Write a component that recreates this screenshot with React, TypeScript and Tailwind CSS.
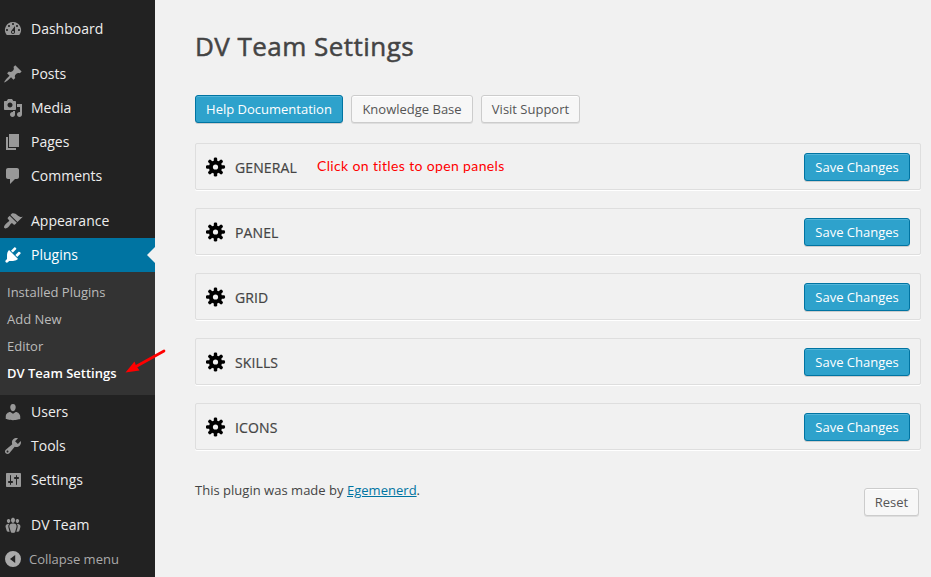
import React from "react";

const paths = {
  dashboard:
    "M3.76 16h12.48A7.998 7.998 0 0 0 10 3a7.998 7.998 0 0 0-6.24 13zM10 4c.55 0 1 .45 1 1s-.45 1-1 1-1-.45-1-1 .45-1 1-1zM6 6c.55 0 1 .45 1 1s-.45 1-1 1-1-.45-1-1 .45-1 1-1zm8 0c.55 0 1 .45 1 1s-.45 1-1 1-1-.45-1-1 .45-1 1-1zm-5.37 5.55L12 7v6c0 1.1-.9 2-2 2s-2-.9-2-2c0-.57.24-1.08.63-1.45zM4 10c.55 0 1 .45 1 1s-.45 1-1 1-1-.45-1-1 .45-1 1-1zm12 0c.55 0 1 .45 1 1s-.45 1-1 1-1-.45-1-1 .45-1 1-1zm-5 3c0-.55-.45-1-1-1s-1 .45-1 1 .45 1 1 1 1-.45 1-1z",
  posts:
    "M10.44 3.02l1.82-1.82 6.36 6.35-1.83 1.82c-1.05-.68-2.48-.57-3.41.36l-.75.75c-.92.93-1.04 2.35-.35 3.41l-1.83 1.82-2.41-2.41-2.8 2.79c-.42.42-3.38 2.71-3.8 2.29s1.86-3.39 2.28-3.81l2.79-2.79L4.1 9.36l1.83-1.82c1.05.69 2.48.57 3.4-.36l.75-.75c.93-.92 1.05-2.35.36-3.41z",
  media:
    "M13 11V4c0-.55-.45-1-1-1h-1.67L9 1H5L3.67 3H2c-.55 0-1 .45-1 1v7c0 .55.45 1 1 1h10c.55 0 1-.45 1-1zM7 4.5c1.38 0 2.5 1.12 2.5 2.5S8.38 9.5 7 9.5 4.5 8.38 4.5 7 5.62 4.5 7 4.5zM14 6h5v10.5c0 1.38-1.12 2.5-2.5 2.5S14 17.88 14 16.5s1.12-2.5 2.5-2.5c.17 0 .34.02.5.05V9h-3V6zm-4 8.05V13h2v3.5c0 1.38-1.12 2.5-2.5 2.5S7 17.88 7 16.5 8.12 14 9.5 14c.17 0 .34.02.5.05z",
  pages: "M6 15V2h10v13H6zm-1 1h8v2H3V5h2v11z",
  comments:
    "M5 2h9c1.1 0 2 .9 2 2v7c0 1.1-.9 2-2 2h-2l-5 5v-5H5c-1.1 0-2-.9-2-2V4c0-1.1.9-2 2-2z",
  appearance:
    "M14.48 11.06L7.41 3.99l1.5-1.5c.5-.56 2.3-.47 3.51.32 1.21.8 1.43 1.28 2.91 2.1 1.18.64 2.45 1.26 4.45.85zm-.71.71L6.7 4.7 4.93 6.47c-.39.39-.39 1.02 0 1.41l1.06 1.06c.39.39.39 1.03 0 1.42-.6.6-1.43 1.11-2.21 1.69-.35.26-.7.53-1.01.84C1.43 14.23.4 16.08 1.4 17.07c.99 1 2.84-.03 4.18-1.36.31-.31.58-.66.85-1.02.57-.78 1.08-1.61 1.69-2.21.39-.39 1.02-.39 1.41 0l1.06 1.06c.39.39 1.02.39 1.41 0z",
  plugins:
    "M13.11 4.36L9.87 7.6 8 5.73l3.24-3.24c.35-.34 1.05-.2 1.56.32.52.51.66 1.21.31 1.55zm-8 1.77l.91-1.12 9.01 9.01-1.19.84c-.71.71-2.63 1.16-3.82 1.16H6.14L4.9 17.26c-.59.59-1.54.59-2.12 0-.59-.58-.59-1.53 0-2.12l1.24-1.24v-3.88c0-1.13.4-3.19 1.09-3.89zm7.26 3.97l3.24-3.24c.34-.35 1.04-.21 1.55.31.52.51.66 1.21.31 1.55l-3.24 3.25z",
  users:
    "M10 9.25c-2.27 0-2.73-3.44-2.73-3.44C7 4.02 7.82 2 9.97 2c2.16 0 2.98 2.02 2.71 3.81 0 0-.41 3.44-2.68 3.44zm0 2.57L12.72 10c2.39 0 4.52 2.33 4.52 4.53v2.49s-3.65 1.13-7.24 1.13c-3.65 0-7.24-1.13-7.24-1.13v-2.49c0-2.25 1.94-4.48 4.47-4.48z",
  tools:
    "M16.68 9.77c-1.34 1.34-3.3 1.67-4.95.99l-5.41 6.52c-.99.99-2.59.99-3.58 0s-.99-2.59 0-3.57l6.52-5.42c-.68-1.65-.35-3.61.99-4.95 1.28-1.28 3.12-1.62 4.72-1.06l-2.89 2.89 2.82 2.82 2.86-2.87c.53 1.58.18 3.39-1.08 4.65zM3.81 16.21c.4.39 1.04.39 1.43 0 .4-.4.4-1.04 0-1.43-.39-.4-1.03-.4-1.43 0-.39.39-.39 1.03 0 1.43z",
  settings:
    "M18 16V4c0-.55-.45-1-1-1H4c-.55 0-1 .45-1 1v12c0 .55.45 1 1 1h13c.55 0 1-.45 1-1zM8 11h1c.55 0 1 .45 1 1s-.45 1-1 1H8v1.5c0 .28-.22.5-.5.5s-.5-.22-.5-.5V13H6c-.55 0-1-.45-1-1s.45-1 1-1h1V5.5c0-.28.22-.5.5-.5s.5.22.5.5V11zm5-2h-1c-.55 0-1-.45-1-1s.45-1 1-1h1V5.5c0-.28.22-.5.5-.5s.5.22.5.5V7h1c.55 0 1 .45 1 1s-.45 1-1 1h-1v5.5c0 .28-.22.5-.5.5s-.5-.22-.5-.5V9z",
  team:
    "M8.03 4.46c-.29 1.28.55 3.46 1.97 3.46 1.41 0 2.25-2.18 1.96-3.46-.22-.98-1.08-1.63-1.96-1.63-.89 0-1.74.65-1.97 1.63zm-4.13.9c-.25 1.08.47 2.93 1.67 2.93s1.92-1.85 1.67-2.93c-.19-.83-.92-1.39-1.67-1.39s-1.48.56-1.67 1.39zm8.86 0c-.25 1.08.47 2.93 1.66 2.93 1.2 0 1.92-1.85 1.67-2.93-.19-.83-.92-1.39-1.67-1.39-.74 0-1.47.56-1.66 1.39zm-.59 11.43l1.25-4.3C14.2 10 12.71 8.47 10 8.47c-2.72 0-4.21 1.53-3.44 4.02l1.26 4.3C8.05 17.51 9 18 10 18c.98 0 1.94-.49 2.17-1.21zM6.2 9C3.6 8.6 2 10 2.65 12.2l1.05 3.65c.25.75 1.4 1.15 2.9.95l-1.1-4.1C5.1 11.2 5.3 9.9 6.2 9zM13.8 9c2.6-.4 4.2 1 3.55 3.2l-1.05 3.65c-.25.75-1.4 1.15-2.9.95l1.1-4.1c.4-1.5.2-2.8-.7-3.7z",
  collapse:
    "M10 2a8 8 0 1 0 0 16 8 8 0 0 0 0-16zM12.2 6v8L7 10z",
};

type IconName = keyof typeof paths;

function Icon({ name }: { name: IconName }) {
  return (
    <svg viewBox="0 0 20 20" className="size-5 shrink-0" fill="currentColor" fillRule="evenodd">
      <path d={paths[name]} />
    </svg>
  );
}

function MenuItem({ icon, label, active }: { icon: IconName; label: string; active?: boolean }) {
  return (
    <a
      className={
        active
          ? "flex h-[34px] items-center gap-2 bg-[#0074a2] pl-[3px] text-white"
          : "flex h-[34px] items-center gap-2 pl-[3px] text-[#999]"
      }
    >
      <Icon name={icon} />
      <span className={active ? "flex-1 text-sm text-white" : "flex-1 text-sm text-[#eee]"}>{label}</span>
      {active && (
        <svg viewBox="0 0 8 16" className="h-4 w-2" fill="#f1f1f1">
          <path d="M8 0v16L0 8z" />
        </svg>
      )}
    </a>
  );
}

function Gear() {
  return (
    <svg viewBox="-9.5 -10 20 20" className="size-5 shrink-0" fill="#000">
      {[0, 45, 90, 135].map((a) => (
        <rect key={a} x="-1.7" y="-9.6" width="3.4" height="19.2" rx="1.4" transform={`rotate(${a})`} />
      ))}
      <circle r="6.6" />
      <circle r="2.6" fill="#f1f1f1" />
    </svg>
  );
}

const primary =
  "h-7 rounded-[3px] border border-[#0074a2] bg-[#2ea2cc] text-[13px] leading-[26px] text-white shadow-[inset_0_1px_0_rgba(120,200,230,0.5),0_1px_0_rgba(0,0,0,0.15)]";
const secondary =
  "h-7 rounded-[3px] border border-[#ccc] bg-[#f7f7f7] text-[13px] leading-[26px] text-[#555] shadow-[inset_0_1px_0_#fff,0_1px_0_rgba(0,0,0,0.08)]";

const sections = ["GENERAL", "PANEL", "GRID", "SKILLS", "ICONS"];

export default function App() {
  return (
    <div className="relative flex h-[577px] w-[931px] overflow-hidden bg-[#f1f1f1] font-['Open_Sans',sans-serif] text-[#444]">
      <nav className="flex w-[155px] shrink-0 flex-col bg-[#222] pt-3">
        <MenuItem icon="dashboard" label="Dashboard" />
        <div className="h-[11px]" />
        <MenuItem icon="posts" label="Posts" />
        <MenuItem icon="media" label="Media" />
        <MenuItem icon="pages" label="Pages" />
        <MenuItem icon="comments" label="Comments" />
        <div className="h-[11px]" />
        <MenuItem icon="appearance" label="Appearance" />
        <MenuItem icon="plugins" label="Plugins" active />
        <ul className="h-[123px] bg-[#333] pt-[7px] pl-[7px] text-[13px] leading-[27px] text-[#bbb]">
          <li>Installed Plugins</li>
          <li>Add New</li>
          <li>Editor</li>
          <li className="font-semibold text-white">DV Team Settings</li>
        </ul>
        <MenuItem icon="users" label="Users" />
        <MenuItem icon="tools" label="Tools" />
        <MenuItem icon="settings" label="Settings" />
        <div className="h-[11px]" />
        <MenuItem icon="team" label="DV Team" />
        <div className="flex h-[34px] items-center gap-1.5 pl-[3px] text-[13px] text-[#aaa]">
          <Icon name="collapse" />
          <span className="pt-0.5">Collapse menu</span>
        </div>
      </nav>

      <main className="flex-1 pr-2.5 pl-10">
        <h1 className="pt-7 text-[26px] leading-9 tracking-[0.46px] [-webkit-text-stroke:0.5px_#444]">
          DV Team Settings
        </h1>
        <div className="mt-[31px] flex gap-2">
          <button className={`${primary} w-[148px]`}>Help Documentation</button>
          <button className={`${secondary} w-[122px]`}>Knowledge Base</button>
          <button className={`${secondary} w-[99px]`}>Visit Support</button>
        </div>
        <div className="mt-5 flex flex-col gap-[18px]">
          {sections.map((s, i) => (
            <section
              key={s}
              className="flex h-[47px] items-center rounded-[2px] border border-[#dedede] pr-2.5 pl-2.5 shadow-[0_1px_0_#fff]"
            >
              <Gear />
              <h2 className="ml-[9px] pt-0.5 text-sm tracking-[0.12px] [-webkit-text-stroke:0.2px_#444]">{s}</h2>
              {i === 0 && (
                <span className="ml-5 pb-0.5 font-['Lato',sans-serif] text-sm tracking-[0.36px] text-[#f00]">
                  Click on titles to open panels
                </span>
              )}
              <button className={`${primary} ml-auto w-[106px]`}>Save Changes</button>
            </section>
          ))}
        </div>
        <div className="flex justify-between pr-0.5">
          <p className="mt-[30px] text-[13px] leading-5 tracking-[0.02px]">
            This plugin was made by <a className="text-[#0074a2] underline">Egemenerd</a>.
          </p>
          <button className={`${secondary} mt-[38px] w-[55px]`}>Reset</button>
        </div>
      </main>

      {/* Annotation arrow over the menu edge */}
      <svg viewBox="0 0 42 26" className="absolute top-[348px] left-[125px] h-[26px] w-[42px]">
        <path d="M39 3L11 18.5" stroke="#f00" strokeWidth="2.7" strokeLinecap="round" />
        <path d="M0.5 24.5L9.5 13.5L11 17.5L14.5 22.5Z" fill="#f00" />
      </svg>
    </div>
  );
}
